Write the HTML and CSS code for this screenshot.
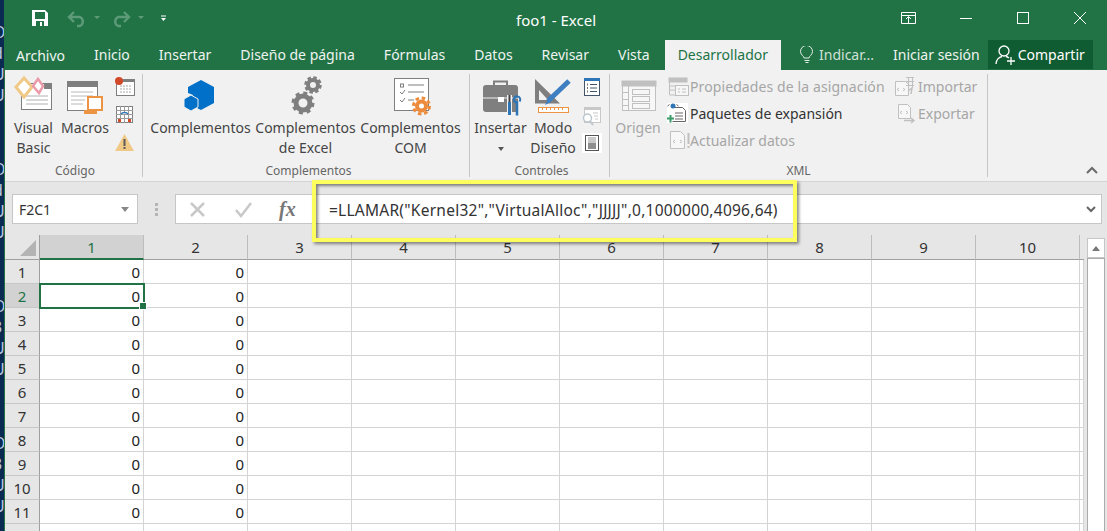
FILE: index.html
```html
<!DOCTYPE html>
<html>
<head>
    <meta charset="UTF-8">
    <title>foo1 - Excel</title>
    <link rel="stylesheet" href="styles.css">
</head>
<body>

<div class="strip">
    <div class="strip-group"><span>O</span><span>d</span><span>U</span><span>U</span></div>
    <div class="strip-group"><span>O</span><span>d</span><span>U</span><span>U</span></div>
    <div class="strip-group"><span>O</span><span>3</span><span>U</span><span>U</span></div>
    <div class="strip-group"><span>O</span><span>3</span><span>U</span><span>U</span></div>
</div>

<div class="window">

    <div class="titlebar">
        <svg class="qat" width="144" height="40" viewBox="28 0 144 40">
            <path d="M32 10h13l3 3v13H32z" fill="#fff"/>
            <rect x="35" y="12" width="10" height="7" fill="#217346"/>
            <rect x="36" y="21" width="8" height="5" fill="#217346"/>
            <rect x="40" y="22" width="2" height="4" fill="#fff"/>
            <path d="M74 12l-5 5 5 5M69 17h11a5 5 0 0 1 0 9h-3" fill="none" stroke="#5c9a78" stroke-width="2.4"/>
            <path d="M124 12l5 5-5 5M129 17h-11a5 5 0 0 0 0 9h3" fill="none" stroke="#5c9a78" stroke-width="2.4"/>
            <path d="M94 16h6l-3 3zM138 16h6l-3 3z" fill="#5c9a78"/>
            <path d="M161 15.500h5v1h-5zM161 18h5l-2.500 3z" fill="#fff"/>
        </svg>
        <div class="title">foo1 - Excel</div>
        <svg class="winctl" width="200" height="40" viewBox="895 0 200 40" fill="none" stroke="#fff">
            <path d="M901.500 12.500h14v11h-14zM901.500 15.500h14M908.500 23v-6M906 19l2.500-2.500 2.500 2.500"/>
            <path d="M960 18.500h12"/>
            <rect x="1017.500" y="12.500" width="11" height="11"/>
            <path d="M1074 12l12 12M1086 12l-12 12"/>
        </svg>
    </div>

    <div class="tabs">
        <div class="tab tab-file">Archivo</div>
        <div class="tab">Inicio</div>
        <div class="tab">Insertar</div>
        <div class="tab">Diseño de página</div>
        <div class="tab">Fórmulas</div>
        <div class="tab">Datos</div>
        <div class="tab">Revisar</div>
        <div class="tab">Vista</div>
        <div class="tab tab-active">Desarrollador</div>
        <svg class="bulb" width="14" height="18" viewBox="799 46 14 18" fill="none" stroke="#e4eee8">
            <path d="M803 58c0-2-3.500-3-3.500-6.500a6 6 0 0 1 12 0c0 3.500-3.500 4.500-3.500 6.500z"/>
            <path d="M803.500 60.500h5M804.500 62.500h3"/>
        </svg>
        <div class="tab tab-dim">Indicar...</div>
        <div class="tab tab-login">Iniciar sesión</div>
        <div class="share">
            <svg width="20" height="20" viewBox="995 44 20 20" fill="none" stroke="#fff" stroke-width="1.300">
                <circle cx="1004" cy="50" r="5"/>
                <path d="M996 63c0-4 3-7 6-7.500M1006 55.500c1 .2 2 .7 3 1.500M1007 60h8M1011 56v8"/>
            </svg>
            <span>Compartir</span>
        </div>
    </div>

    <div class="ribbon">

        <div class="group group-code">
            <div class="group-body">
                <div class="big big-vb">
                    <svg width="51" height="44" viewBox="8 74 51 44">
                        <rect x="21.500" y="83.500" width="30" height="26" fill="#fff" stroke="#7f7f7f"/>
                        <rect x="44" y="83" width="8" height="6" fill="#7f7f7f"/>
                        <path d="M26 96h22M26 100h22M26 104h22" stroke="#b0b0b0"/>
                        <path d="M24 78l8 9-8 10-8-10z" fill="#fff" stroke="#f0c987" stroke-width="3"/>
                        <path d="M38 79l5 7-4 7-6-7z" fill="#fff" stroke="#eb9aa9" stroke-width="2.500"/>
                    </svg>
                    <div class="big-label">Visual<br>Basic</div>
                </div>
                <div class="big big-macros">
                    <svg width="52" height="44" viewBox="59 74 52 44">
                        <rect x="67.500" y="81.500" width="30" height="29" fill="#fff" stroke="#7f7f7f"/>
                        <rect x="67" y="81" width="31" height="6" fill="#7f7f7f"/>
                        <path d="M71 92h22M71 96h22M71 100h14M71 104h12" stroke="#b8b8b8"/>
                        <path d="M88 97h14v13H88z" fill="#fff" stroke="#ed9344" stroke-width="2"/>
                        <path d="M84 110h13v4H84z" fill="#ed9344"/>
                    </svg>
                    <div class="big-label">Macros</div>
                </div>
                <div class="small-col">
                    <svg width="26" height="28" viewBox="111 74 26 28">
                        <rect x="116.500" y="79.500" width="18" height="16" fill="#fff" stroke="#7f7f7f"/>
                        <rect x="116" y="79" width="19" height="3" fill="#7f7f7f"/>
                        <path d="M120 86h12M120 89h12M120 92h12" stroke="#aaa" stroke-dasharray="2 1"/>
                        <circle cx="119" cy="81" r="4" fill="#d2492a"/>
                    </svg>
                    <svg width="26" height="28" viewBox="111 102 26 28">
                        <rect x="116.500" y="106.500" width="16" height="16" fill="#fff" stroke="#7f7f7f"/>
                        <path d="M116 110.500h17M116 114.500h17M116 118.500h17M120.500 106v17M124.500 106v17M128.500 106v17" stroke="#9a9a9a"/>
                        <path d="M121 114a4 3 0 0 1 7 0" fill="#fff" stroke="#2f75b5" stroke-width="1.500"/>
                        <rect x="118" y="119" width="3" height="3" fill="#d2492a"/>
                        <rect x="128" y="119" width="3" height="3" fill="#d2492a"/>
                    </svg>
                    <svg width="26" height="28" viewBox="111 130 26 28">
                        <path d="M124.500 134l9.500 17h-19z" fill="#f0c987"/>
                        <path d="M123.500 139h2v7h-2zM123.500 147h2v2h-2z" fill="#5a5a5a"/>
                    </svg>
                </div>
            </div>
            <div class="group-label">Código</div>
        </div>

        <div class="group group-addins">
            <div class="group-body">
                <div class="big big-addin">
                    <svg width="105" height="44" viewBox="148 74 105 44">
                        <path d="M201 80l13 7v16l-13 7-8-4v-11l-5-2v-6z" fill="#0070c8"/>
                        <path d="M191 95l7 4v8l-7 4-7-4v-8z" fill="#0070c8" stroke="#f1f1f1"/>
                    </svg>
                    <div class="big-label">Complementos</div>
                </div>
                <div class="big big-addin">
                    <svg width="105" height="44" viewBox="253 74 105 44" fill="none" stroke="#7f7f7f">
                        <circle cx="313" cy="85" r="5" stroke-width="4"/>
                        <circle cx="313" cy="85" r="7.500" stroke-width="2.500" stroke-dasharray="3.500 2.400"/>
                        <circle cx="303" cy="103" r="7" stroke-width="5"/>
                        <circle cx="303" cy="103" r="10" stroke-width="3" stroke-dasharray="4 3.850"/>
                    </svg>
                    <div class="big-label">Complementos<br>de Excel</div>
                </div>
                <div class="big big-addin">
                    <svg width="105" height="44" viewBox="358 74 105 44">
                        <rect x="394.500" y="78.500" width="34" height="32" fill="#fff" stroke="#7f7f7f"/>
                        <rect x="400.500" y="84" width="3" height="3" fill="none" stroke="#7f7f7f"/>
                        <path d="M408 85h16M408 92h16M408 100h6M400 92l2 2 3-4M400 100l2 2 3-4" fill="none" stroke="#7f7f7f"/>
                        <circle cx="421.500" cy="106" r="4.500" fill="none" stroke="#ed8b3c" stroke-width="4"/>
                        <circle cx="421.500" cy="106" r="8" fill="none" stroke="#ed8b3c" stroke-width="3" stroke-dasharray="3.500 2.780"/>
                    </svg>
                    <div class="big-label">Complementos<br>COM</div>
                </div>
            </div>
            <div class="group-label">Complementos</div>
        </div>

        <div class="group group-controls">
            <div class="group-body">
                <div class="big big-insert">
                    <svg width="53" height="44" viewBox="474 74 53 44">
                        <path d="M494 85v-3.500h13V85" fill="none" stroke="#7f7f7f" stroke-width="2"/>
                        <rect x="483" y="85" width="35" height="27" rx="3" fill="#7f7f7f"/>
                        <path d="M483 98h35" stroke="#f1f1f1"/>
                        <rect x="498" y="97" width="6" height="5" fill="#fff"/>
                        <path d="M509.500 95v21" stroke="#f1f1f1" stroke-width="5"/>
                        <path d="M509.500 95v7" stroke="#444" stroke-width="2"/>
                        <path d="M509.500 102v13" stroke="#2f75b5" stroke-width="3"/>
                        <path d="M517 96.500a3 3 0 0 0 0 6v13" fill="none" stroke="#2f75b5" stroke-width="2.500"/>
                        <path d="M517 96.500a3 3 0 0 1 2.500 5" fill="none" stroke="#2f75b5" stroke-width="2"/>
                    </svg>
                    <div class="big-label">Insertar<span class="caret"></span></div>
                </div>
                <div class="big big-design">
                    <svg width="52" height="44" viewBox="527 74 52 44">
                        <path d="M535 79v24.500h25zM539 90v10h9z" fill="#7f7f7f" fill-rule="evenodd"/>
                        <path d="M569 81l-21 20" stroke="#3d7fc1" stroke-width="5"/>
                        <path d="M545 105l3-6 3 3z" fill="#3d7fc1"/>
                        <rect x="538.500" y="107.500" width="30" height="5" fill="#fff" stroke="#ed9344"/>
                        <path d="M542.500 108v2M546.500 108v2M550.500 108v2M554.500 108v2M558.500 108v2M562.500 108v2" stroke="#ed9344"/>
                    </svg>
                    <div class="big-label">Modo<br>Diseño</div>
                </div>
                <div class="small-col">
                    <svg width="26" height="28" viewBox="579 74 26 28">
                        <rect x="584.500" y="78.500" width="15" height="17" fill="#fff" stroke="#44546a"/>
                        <rect x="584" y="78" width="16" height="3" fill="#2f75b5"/>
                        <path d="M590 84.500h7M590 88h7M590 91.500h7" stroke="#44546a"/>
                        <path d="M587 84.500h1M587 88h1M587 91.500h1" stroke="#777" stroke-width="2"/>
                    </svg>
                    <svg width="26" height="28" viewBox="579 102 26 28">
                        <rect x="584.500" y="107.500" width="16" height="15" fill="#fff" stroke="#c8c8c8"/>
                        <rect x="584" y="107" width="17" height="3" fill="#c8c8c8"/>
                        <circle cx="587.500" cy="118" r="4" fill="#fff" stroke="#bcc6cc" stroke-width="1.500"/>
                        <path d="M590 121l3 4" stroke="#bcc6cc" stroke-width="2"/>
                        <path d="M593 113h5M594 116h4M595 119h3" stroke="#c8c8c8"/>
                    </svg>
                    <svg width="26" height="28" viewBox="579 130 26 28">
                        <rect x="582" y="133" width="20" height="20" fill="#fff"/>
                        <rect x="585.500" y="135.500" width="13" height="15" fill="#fff" stroke="#555"/>
                        <rect x="588" y="137" width="8" height="6" fill="#c9c9c9"/>
                        <rect x="588" y="143" width="8" height="6" fill="#8f8f8f"/>
                    </svg>
                </div>
            </div>
            <div class="group-label">Controles</div>
        </div>

        <div class="group group-xml">
            <div class="group-body">
                <div class="big big-origin">
                    <svg width="56" height="44" viewBox="610 74 56 44" fill="none" stroke="#c0c0c0">
                        <rect x="622.500" y="81.500" width="33" height="29" fill="#f7f7f7"/>
                        <rect x="622" y="81" width="34" height="5" fill="#c0c0c0"/>
                        <path d="M628.500 86v24M622 92.500h6M622 99.500h6M622 105.500h6"/>
                        <rect x="632.500" y="89.500" width="17" height="5"/>
                        <rect x="632.500" y="96.500" width="17" height="5"/>
                        <rect x="632.500" y="103.500" width="17" height="5"/>
                    </svg>
                    <div class="big-label muted">Origen</div>
                </div>
                <div class="xml-col xml-col-main">
                    <div class="xml-row muted">
                        <svg width="24" height="22" viewBox="667 76 24 22" fill="none" stroke="#c0c0c0">
                            <rect x="669" y="78" width="18" height="4" fill="#c0c0c0"/>
                            <path d="M669.500 82v13h6M669.500 86h6M669.500 90h6"/>
                            <rect x="675.500" y="85.500" width="13" height="10" fill="#f7f7f7"/>
                            <path d="M678 89h2M682 89h4M678 92h2M682 92h4"/>
                        </svg>
                        <span class="wide">Propiedades de la asignación</span>
                    </div>
                    <div class="xml-row">
                        <svg width="24" height="22" viewBox="667 103 24 22">
                            <rect x="667" y="103" width="21" height="20" fill="#fff"/>
                            <path d="M672.500 107.500h10l3 3v11h-13" fill="#fff" stroke="#666"/>
                            <path d="M675 113h8M675 116h8M675 119h8" stroke="#666"/>
                            <circle cx="673" cy="106" r="2.500" fill="#2f75b5"/>
                            <path d="M667.500 106l2-1.500M678.500 106l-2-1.500" stroke="#666"/>
                            <path d="M667 118.500h7M670.500 115v7.500" stroke="#3b9c6a" stroke-width="2"/>
                        </svg>
                        Paquetes de expansión
                    </div>
                    <div class="xml-row muted">
                        <svg width="24" height="22" viewBox="667 130 24 22" fill="none" stroke="#c0c0c0">
                            <path d="M670.500 131.500h10l4 4v13h-14z" fill="#f7f7f7"/>
                            <path d="M675 140l-2 1.500 2 1.500M680 140l2 1.500-2 1.500"/>
                            <path d="M688.500 133v11M688.500 146v2" stroke-width="2"/>
                        </svg>
                        Actualizar datos
                    </div>
                </div>
                <div class="xml-col">
                    <div class="xml-row muted">
                        <svg class="xml-side" width="23" height="22" viewBox="893 76 23 22" fill="none" stroke="#c0c0c0">
                            <path d="M895.500 81.500h10l3 3v11h-13z" fill="#f7f7f7"/>
                            <path d="M899 88l-2 1.500 2 1.500M903 88l2 1.500-2 1.500"/>
                            <path d="M906 77.500h8M906 81.500h8M906 85.500h8M908.500 77v10M912.500 77v10"/>
                            <path d="M908 91l4-3-1 6" stroke-width="1.500"/>
                        </svg>
                        Importar
                    </div>
                    <div class="xml-row muted">
                        <svg class="xml-side" width="23" height="22" viewBox="893 103 23 22" fill="none" stroke="#c0c0c0">
                            <path d="M898.500 104.500h9l3 3v11h-12z" fill="#f7f7f7"/>
                            <path d="M902 111l-2 1.500 2 1.500M906 111l2 1.500-2 1.500"/>
                            <path d="M904 120.500h9M911 118l3 2.500-3 2.500" stroke-width="1.500"/>
                        </svg>
                        Exportar
                    </div>
                </div>
            </div>
            <div class="group-label">XML</div>
        </div>

        <svg class="collapse" width="14" height="9" viewBox="0 0 14 9" fill="none" stroke="#6a6a6a" stroke-width="2">
            <path d="M2 7l5-5 5 5"/>
        </svg>
    </div>

    <div class="formulabar">
        <div class="namebox">
            <span>F2C1</span>
            <i class="namebox-caret"></i>
        </div>
        <div class="grip"><i></i><i></i><i></i></div>
        <div class="formula">
            <svg class="fx-buttons" width="70" height="30" viewBox="185 194 70 30" fill="none" stroke="#c8c8c8" stroke-width="2.500">
                <path d="M191 203l13 13M204 203l-13 13"/>
                <path d="M236 210l5 6 10-13"/>
            </svg>
            <span class="fx">fx</span>
            <span class="formula-text">=LLAMAR("Kernel32","VirtualAlloc","JJJJJ",0,1000000,4096,64)</span>
            <svg class="formula-more" width="10" height="8" viewBox="0 0 10 8" fill="none" stroke="#666" stroke-width="2">
                <path d="M1 1l4 4 4-4"/>
            </svg>
        </div>
        <div class="highlight"></div>
    </div>

    <div class="sheet">
        <table class="grid">
            <tr>
                <th class="corner"><i></i></th>
                <th class="col-on">1</th><th>2</th><th>3</th><th>4</th><th>5</th><th>6</th><th>7</th><th>8</th><th>9</th><th>10</th><th class="col-end"></th>
            </tr>
            <tr><th>1</th><td>0</td><td>0</td><td></td><td></td><td></td><td></td><td></td><td></td><td></td><td></td><td></td></tr>
            <tr><th class="row-on">2</th><td class="sel">0</td><td>0</td><td></td><td></td><td></td><td></td><td></td><td></td><td></td><td></td><td></td></tr>
            <tr><th>3</th><td>0</td><td>0</td><td></td><td></td><td></td><td></td><td></td><td></td><td></td><td></td><td></td></tr>
            <tr><th>4</th><td>0</td><td>0</td><td></td><td></td><td></td><td></td><td></td><td></td><td></td><td></td><td></td></tr>
            <tr><th>5</th><td>0</td><td>0</td><td></td><td></td><td></td><td></td><td></td><td></td><td></td><td></td><td></td></tr>
            <tr><th>6</th><td>0</td><td>0</td><td></td><td></td><td></td><td></td><td></td><td></td><td></td><td></td><td></td></tr>
            <tr><th>7</th><td>0</td><td>0</td><td></td><td></td><td></td><td></td><td></td><td></td><td></td><td></td><td></td></tr>
            <tr><th>8</th><td>0</td><td>0</td><td></td><td></td><td></td><td></td><td></td><td></td><td></td><td></td><td></td></tr>
            <tr><th>9</th><td>0</td><td>0</td><td></td><td></td><td></td><td></td><td></td><td></td><td></td><td></td><td></td></tr>
            <tr><th>10</th><td>0</td><td>0</td><td></td><td></td><td></td><td></td><td></td><td></td><td></td><td></td><td></td></tr>
            <tr><th>11</th><td>0</td><td>0</td><td></td><td></td><td></td><td></td><td></td><td></td><td></td><td></td><td></td></tr>
            <tr><th>12</th><td></td><td></td><td></td><td></td><td></td><td></td><td></td><td></td><td></td><td></td><td></td></tr>
        </table>
        <div class="scrollbar">
            <div class="scroll-up"><i></i></div>
            <div class="scroll-track"></div>
        </div>
    </div>

</div>

</body>
</html>
```

FILE: styles.css
```css
* {
    box-sizing: border-box;
}

html, body {
    height: 531px;
}

body {
    margin: 0;
    display: flex;
    overflow: hidden;
    font-family: "Noto Sans", sans-serif;
    font-size: 14px;
    color: #444;
    background: #e6e6e6;
}

svg {
    display: block;
}

/* sliver of the window behind */
.strip {
    width: 4px;
    flex: none;
    overflow: hidden;
    background: #0b2a52;
    padding-top: 22px;
}

.strip-group {
    height: 137px;
    margin-left: -7px;
    font-size: 16px;
    line-height: 21px;
    color: #b9c9e0;
}

.strip-group span {
    display: block;
}

.window {
    flex: 1;
    min-width: 0;
    border-left: 1px solid #217346;
}

/* title bar */
.titlebar {
    height: 40px;
    display: flex;
    align-items: center;
    padding-left: 23px;
    background: #217346;
    color: #fff;
}

.title {
    flex: 1;
    text-align: center;
    padding-left: 45px;
    font-size: 15px;
}

.winctl {
    margin-right: 12px;
}

/* tabs */
.tabs {
    height: 30px;
    display: flex;
    align-items: center;
    padding-left: 11px;
    background: #217346;
    color: #eef4f0;
}

.tab {
    margin-right: 29px;
    line-height: 30px;
    height: 30px;
    white-space: nowrap;
}

.tab-file {
    line-height: 32px;
}

.tab-active {
    margin: 0 19px 0 -14px;
    padding: 0 13px;
    background: #f1f1f1;
    color: #217346;
}

.tab-dim {
    margin: 0 19px 0 5px;
    color: #cfe0d6;
}

.tab-login {
    margin-right: 8px;
}

.share {
    height: 29px;
    width: 105px;
    display: flex;
    align-items: center;
    gap: 3px;
    padding-left: 7px;
    background: #0f5c32;
    color: #fff;
    align-self: flex-start;
}

/* ribbon */
.ribbon {
    position: relative;
    height: 112px;
    display: flex;
    padding-top: 4px;
    background: #f1f1f1;
    border-bottom: 1px solid #d4d4d4;
}

.group {
    height: 103px;
    display: flex;
    flex-direction: column;
    border-right: 1px solid #c6c6c6;
}

.group-code {
    width: 138px;
    padding-left: 3px;
}

.group-addins {
    width: 327px;
    padding-left: 5px;
}

.group-controls {
    width: 140px;
    padding-left: 4px;
}

.group-xml {
    width: 378px;
}

.group-body {
    flex: 1;
    display: flex;
}

.group-label {
    height: 14px;
    line-height: 14px;
    margin-bottom: -1px;
    text-align: center;
    font-size: 12px;
    color: #666;
}

.big {
    flex: none;
    text-align: center;
    white-space: nowrap;
}

.big-vb { width: 51px; }
.big-macros { width: 52px; }
.big-addin { width: 105px; }
.big-insert { width: 53px; }
.big-design { width: 52px; }
.big-origin { width: 56px; }

.big-label {
    line-height: 20px;
}

.caret {
    display: block;
    width: 0;
    height: 0;
    margin: 9px auto 0;
    border: 3px solid transparent;
    border-top: 4px solid #555;
    border-bottom: 0;
}

.small-col {
    width: 26px;
    flex: none;
}

.muted {
    color: #a6a6a6;
}

.xml-col {
    margin-top: -1px;
}

.xml-col-main {
    width: 229px;
}

.xml-row {
    height: 27px;
    display: flex;
    align-items: center;
    white-space: nowrap;
    color: #333;
}

.xml-row.muted {
    color: #a6a6a6;
}

.xml-row svg {
    margin-left: 1px;
    margin-right: -1px;
}

.xml-row .xml-side {
    margin-left: -2px;
    margin-right: 2px;
}

.wide {
    letter-spacing: 0.1px;
}

.collapse {
    position: absolute;
    right: 8px;
    bottom: 6px;
}

/* formula bar */
.formulabar {
    position: relative;
    height: 53px;
    display: flex;
    align-items: flex-start;
    padding: 12px 5px 0 7px;
    background: #e6e6e6;
}

.namebox {
    width: 126px;
    height: 30px;
    display: flex;
    align-items: center;
    justify-content: space-between;
    padding: 0 8px 0 6px;
    background: #fff;
    border: 1px solid #c6c6c6;
    color: #333;
}

.namebox-caret {
    width: 0;
    height: 0;
    border: 4px solid transparent;
    border-top: 5px solid #888;
    border-bottom: 0;
}

.grip {
    width: 37px;
    height: 30px;
    display: flex;
    flex-direction: column;
    align-items: center;
    justify-content: center;
    gap: 2px;
}

.grip i {
    width: 3px;
    height: 3px;
    background: #b5b5b5;
}

.formula {
    flex: 1;
    height: 30px;
    display: flex;
    align-items: center;
    padding-left: 9px;
    background: #fff;
    border: 1px solid #c6c6c6;
    color: #333;
}

.fx {
    width: 20px;
    margin-left: 24px;
    font-family: "Liberation Serif", serif;
    font-style: italic;
    font-weight: bold;
    font-size: 20px;
    color: #777;
}

.formula-text {
    flex: 1;
    margin-left: 30px;
    padding-top: 2px;
    font-size: 15.5px;
    letter-spacing: 0.25px;
    white-space: nowrap;
}

.formula-more {
    margin: 2px 5px 0 0;
}

.highlight {
    position: absolute;
    left: 307px;
    top: -2px;
    width: 485px;
    height: 62px;
    border: 4px solid #fdfd5e;
    box-shadow: 2px 2px 3px rgba(0, 0, 0, 0.45), inset 2px 2px 3px rgba(0, 0, 0, 0.45);
}

/* sheet */
.sheet {
    display: flex;
    height: 296px;
    overflow: hidden;
}

.grid {
    table-layout: fixed;
    width: 1079px;
    border-collapse: separate;
    border-spacing: 0;
    flex: none;
    align-self: flex-start;
}

.grid th, .grid td {
    width: 104px;
    height: 24px;
    padding: 1px 0 0;
    font-size: 15px;
    font-weight: normal;
    line-height: 22px;
    overflow: hidden;
}

.grid th {
    background: #e6e6e6;
    color: #333;
    text-align: center;
    border-right: 1px solid #c6c6c6;
    border-bottom: 1px solid #c6c6c6;
}

.grid tr:first-child th {
    height: 25px;
    border-bottom: 1px solid #9f9f9f;
    border-right: 1px solid #bdbdbd;
    line-height: 23px;
}

.grid tr th:first-child {
    width: 35px;
    border-right: 1px solid #9f9f9f;
}

.grid td {
    background: #fff;
    color: #222;
    text-align: right;
    padding-right: 3px;
    border-right: 1px solid #d4d4d4;
    border-bottom: 1px solid #d4d4d4;
}

.grid td:last-child, .grid .col-end {
    width: 4px;
    padding: 0;
}

.grid tr:first-child .col-end {
    border-right: 0;
}

.grid tr:first-child .col-on {
    background: #d2d2d2;
    color: #217346;
    border-bottom: 2px solid #217346;
    line-height: 22px;
}

.grid .row-on {
    background: #d2d2d2;
    color: #217346;
}

.grid .sel {
    position: relative;
    overflow: visible;
    outline: 2px solid #217346;
    outline-offset: -1px;
}

.grid .sel::after {
    content: "";
    position: absolute;
    right: -4px;
    bottom: -3px;
    width: 6px;
    height: 6px;
    background: #217346;
    border: 1px solid #fff;
}

.corner {
    position: relative;
}

.corner i {
    position: absolute;
    left: 15px;
    top: 5px;
    width: 0;
    height: 0;
    border-style: solid;
    border-width: 0 0 16px 16px;
    border-color: transparent transparent #b4b4b4 transparent;
}

.scrollbar {
    width: 18px;
    margin-left: 3px;
    padding-top: 3px;
}

.scroll-up {
    height: 20px;
    display: flex;
    align-items: center;
    justify-content: center;
    background: #fff;
    border: 1px solid #c6c6c6;
}

.scroll-up i {
    width: 0;
    height: 0;
    border: 4px solid transparent;
    border-bottom: 5px solid #777;
    border-top: 0;
}

.scroll-track {
    height: 300px;
    background: #fff;
    border: 1px solid #ababab;
    border-bottom: 0;
}
```
